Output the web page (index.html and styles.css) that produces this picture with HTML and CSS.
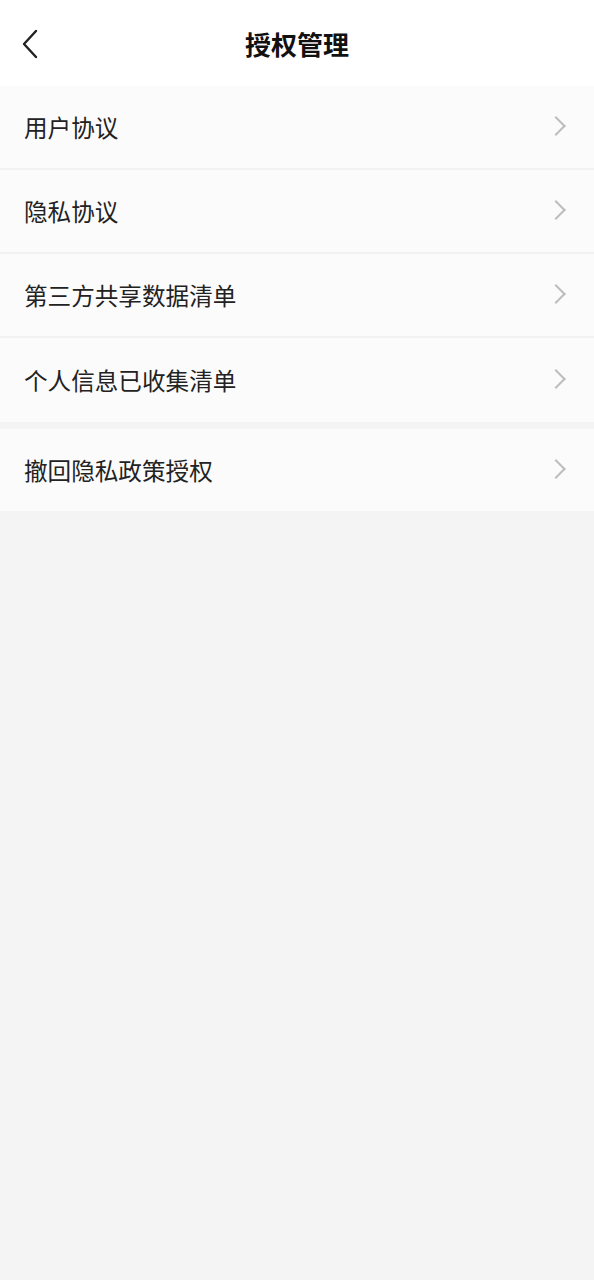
FILE: index.html
```html
<!DOCTYPE html>
<html lang="zh-CN">
<head>
    <meta charset="UTF-8">
    <meta name="viewport" content="width=device-width, initial-scale=1.0">
    <title>授权管理</title>
    <link rel="stylesheet" href="styles.css">
</head>
<body>

    <header class="nav-bar">
        <a class="back-btn" href="#">
            <svg width="20" height="30" viewBox="0 0 20 30"><path d="M16 2 L4 15 L16 28" fill="none" stroke="#222" stroke-width="2.4" stroke-linecap="round" stroke-linejoin="round"/></svg>
        </a>
        <h1 class="nav-title">授权管理</h1>
    </header>

    <ul class="menu-group">
        <li class="menu-item"><span>用户协议</span><i class="arrow"></i></li>
        <li class="menu-item"><span>隐私协议</span><i class="arrow"></i></li>
        <li class="menu-item"><span>第三方共享数据清单</span><i class="arrow"></i></li>
        <li class="menu-item"><span>个人信息已收集清单</span><i class="arrow"></i></li>
    </ul>

    <ul class="menu-group single">
        <li class="menu-item"><span>撤回隐私政策授权</span><i class="arrow"></i></li>
    </ul>

</body>
</html>
```

FILE: styles.css
```css
body {
    margin: 0;
    padding: 0;
    min-height: 1280px;
    background-color: #f4f4f4;
    font-family: "Noto Sans CJK SC", "Noto Sans", sans-serif;
    color: #222;
}

.nav-bar {
    position: relative;
    height: 86px;
    background-color: #fff;
    display: flex;
    align-items: center;
    justify-content: center;
}

.back-btn {
    position: absolute;
    left: 20px;
    top: 29px;
    display: block;
    line-height: 0;
}

.nav-title {
    margin: 0;
    font-size: 26px;
    font-weight: 700;
    color: #111;
}

.menu-group {
    list-style: none;
    margin: 0 0 7px;
    padding: 0;
    background-color: #fbfbfb;
}

.menu-item {
    height: 82px;
    padding: 0 31px 0 24px;
    display: flex;
    align-items: center;
    justify-content: space-between;
    font-size: 23.6px;
    border-bottom: 2px solid #f1f1f1;
}

.menu-item:last-child {
    border-bottom: none;
    height: 84px;
}

.single .menu-item:last-child {
    height: 82px;
}

.arrow {
    width: 12px;
    height: 12px;
    border-top: 2px solid #bdbdbd;
    border-right: 2px solid #bdbdbd;
    transform: rotate(45deg);
    margin-bottom: 2px;
}
```
